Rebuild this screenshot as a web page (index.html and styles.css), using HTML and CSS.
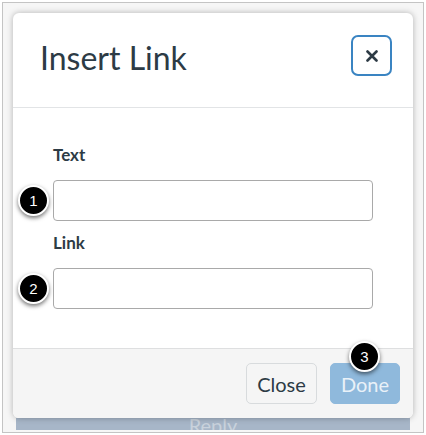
FILE: index.html
```html
<!DOCTYPE html>
<html lang="en">

<head>
    <meta charset="UTF-8">
    <meta name="viewport" content="width=device-width, initial-scale=1.0">
    <title>Insert Link</title>
    <link rel="stylesheet" href="styles.css">
</head>

<body>
    <div class="frame">
        <div class="modal">
            <div class="modal-header">
                <h2 class="modal-title">Insert Link</h2>
                <button class="close-x" aria-label="Close">
                    <svg width="12" height="12" viewBox="0 0 12 12">
                        <path d="M1.5 1.5 L10.5 10.5 M10.5 1.5 L1.5 10.5" stroke="#2d3b45" stroke-width="2.6" stroke-linecap="round" fill="none" />
                    </svg>
                </button>
            </div>

            <div class="modal-body">
                <label class="field-label" for="linkText">Text</label>
                <div class="field">
                    <span class="badge badge-field">1</span>
                    <input type="text" id="linkText" class="field-input">
                </div>

                <label class="field-label" for="linkUrl">Link</label>
                <div class="field">
                    <span class="badge badge-field">2</span>
                    <input type="text" id="linkUrl" class="field-input">
                </div>
            </div>

            <div class="modal-footer">
                <button class="btn btn-close">Close</button>
                <button class="btn btn-done">
                    Done
                    <span class="badge badge-done">3</span>
                </button>
            </div>
        </div>

        <!-- reply button peeking out below the dialog -->
        <div class="reply-bar"><span>Reply</span></div>
    </div>
</body>

</html>
```

FILE: styles.css
```css
* {
    box-sizing: border-box;
    margin: 0;
    padding: 0;
}

body {
    font-family: 'Lato', 'Liberation Sans', sans-serif;
    background-color: #ffffff;
    color: #2d3b45;
    width: 426px;
    height: 435px;
    overflow: hidden;
}

.frame {
    margin: 2px;
    width: 422px;
    height: 431px;
    border: 1px solid #c4c4c4;
    background-color: #f6f6f6;
    padding: 10px 10px 0 10px;
    overflow: hidden;
}

.modal {
    width: 400px;
    height: 405px;
    background-color: #ffffff;
    border-radius: 6px;
    box-shadow: 0 0 6px rgba(0, 0, 0, 0.28);
    display: flex;
    flex-direction: column;
    position: relative;
    z-index: 2;
}

.modal-header {
    height: 95px;
    display: flex;
    justify-content: space-between;
    align-items: flex-start;
    padding: 22px 21px 0 27px;
    border-bottom: 1px solid #e2e4e6;
}

.modal-title {
    font-size: 32px;
    font-weight: 400;
    line-height: 1.2;
    margin-top: 4px;
    color: #2d3b45;
}

.close-x {
    width: 41px;
    height: 41px;
    border: 2px solid #3a84c2;
    border-radius: 7px;
    background: #ffffff;
    display: flex;
    align-items: center;
    justify-content: center;
    cursor: pointer;
}

.modal-body {
    flex: 1;
    padding: 36px 0 0 40px;
}

.field-label {
    display: block;
    font-size: 17px;
    font-weight: 700;
    line-height: 22px;
    margin-bottom: 14px;
}

.field {
    position: relative;
    margin-bottom: 11px;
}

.field-input {
    display: block;
    width: 320px;
    height: 41px;
    border: 1px solid #a9a9a9;
    border-radius: 4px;
    background: #ffffff;
}

.modal-footer {
    height: 70px;
    border-top: 1px solid #dedfe0;
    background-color: #f5f5f5;
    border-radius: 0 0 6px 6px;
    display: flex;
    justify-content: flex-end;
    align-items: flex-start;
    gap: 13px;
    padding: 14px 13px 0 0;
}

.btn {
    height: 41px;
    border-radius: 5px;
    font-family: 'Lato', 'Liberation Sans', sans-serif;
    font-size: 20px;
    cursor: pointer;
    position: relative;
}

.btn-close {
    width: 71px;
    background-color: #f5f5f5;
    border: 1px solid #d8dbdd;
    color: #2d3b45;
}

.btn-done {
    width: 70px;
    background-color: #8fb9dc;
    border: 1px solid #8fb9dc;
    color: #e9f1f8;
}

/* numbered callouts */
.badge {
    position: absolute;
    width: 31px;
    height: 31px;
    border-radius: 50%;
    background-color: #000000;
    border: 2px solid #ffffff;
    box-shadow: 0 2px 4px rgba(0, 0, 0, 0.55);
    color: #ffffff;
    font-family: 'Liberation Sans', Arial, sans-serif;
    font-size: 15px;
    line-height: 27px;
    text-align: center;
}

.badge-field {
    left: -35px;
    top: 5px;
}

.badge-done {
    left: 18px;
    top: -23px;
}

.reply-bar {
    margin: 0 3px;
    height: 12px;
    background-color: #a7b6c8;
    overflow: hidden;
    text-align: center;
    position: relative;
    z-index: 1;
}

.reply-bar span {
    display: block;
    font-size: 20px;
    line-height: 20px;
    margin-top: -3px;
    color: #c9d2dc;
}
```
